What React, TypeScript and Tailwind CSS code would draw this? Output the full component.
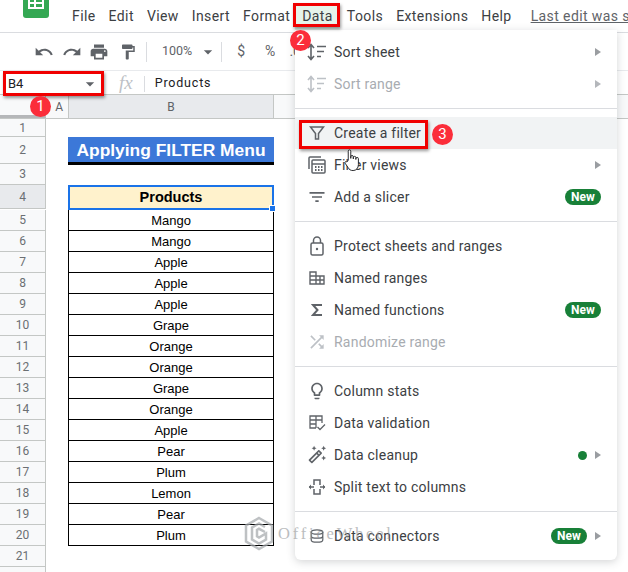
import { MdUndo, MdRedo, MdPrint, MdFormatPaint, MdFilterList, MdOutlineLightbulb, MdOutlineAutoFixHigh, MdShuffle, MdArrowDropDown } from "react-icons/md";

const font = { fontFamily: "Roboto, sans-serif" };

const products = ["Mango", "Mango", "Apple", "Apple", "Apple", "Grape", "Orange", "Orange", "Grape", "Orange", "Apple", "Pear", "Plum", "Lemon", "Pear", "Plum"];

function SortIcon({ muted }: { muted?: boolean }) {
  return (
    <svg width="24" height="18" viewBox="0 0 24 18" fill="none" stroke={muted ? "#bdc1c6" : "#5f6368"} strokeWidth="1.6">
      <path d="M6 2v14M3 5l3-3.5L9 5M3 13l3 3.5L9 13" />
      <path d="M12 3.500h9M12 8.500h7M12 13.500h4" />
    </svg>
  );
}

function FunnelIcon() {
  return (
    <svg width="16" height="14" viewBox="0 0 16 14" fill="none" stroke="#5f6368" strokeWidth="1.5">
      <path d="M1.500 1h13L9.500 7.500V13h-3V7.500z" />
    </svg>
  );
}

function FilterViewsIcon() {
  return (
    <svg width="20" height="20" viewBox="0 0 20 20" fill="none" stroke="#5f6368" strokeWidth="1.5">
      <path d="M2 14V3a1 1 0 0 1 1-1h11" />
      <rect x="5" y="5" width="13" height="13" rx="1" />
      <path d="M5 9h13" />
      <path d="M8 12h1.500M11 12h1.500M14 12h1.500M8 15h1.500M11 15h1.500M14 15h1.500" strokeWidth="1.800" />
    </svg>
  );
}

function LockIcon() {
  return (
    <svg width="14" height="20" viewBox="0 0 14 20" fill="none" stroke="#5f6368" strokeWidth="1.500">
      <rect x="1" y="7" width="12" height="12" rx="1.500" />
      <path d="M3.500 7V4.500a3.500 3.500 0 0 1 7 0V7" />
      <circle cx="7" cy="13" r="1.200" fill="#5f6368" stroke="none" />
    </svg>
  );
}

function NamedRangesIcon() {
  return (
    <svg width="16" height="14" viewBox="0 0 16 14" fill="none" stroke="#5f6368" strokeWidth="1.400">
      <path d="M1 1h6v12H1zM7 5h8v8H7zM1 5h6M1 9h14M11 5v8" />
    </svg>
  );
}

function SigmaIcon() {
  return (
    <svg width="12" height="14" viewBox="0 0 12 14" fill="none" stroke="#5f6368" strokeWidth="2">
      <path d="M11 2H2l4.500 5L2 12h9" />
    </svg>
  );
}

function ValidationIcon() {
  return (
    <svg width="18" height="18" viewBox="0 0 18 18" fill="none" stroke="#5f6368" strokeWidth="1.300">
      <path d="M8 14H2V2h12v7M2 6h12M2 10h6M8 2v12" />
      <path d="M9.500 13l2.500 2.500 5-5" />
    </svg>
  );
}

function SplitIcon() {
  return (
    <svg width="18" height="18" viewBox="0 0 18 18" fill="none" stroke="#5f6368" strokeWidth="1.500">
      <path d="M6 5V2h6v3M6 13v3h6v-3M6 5v2M12 5v2M6 11v2M12 11v2" />
      <path d="M1 9h5M12 9h5" />
      <path d="M3 6.500L.8 9 3 11.500M15 6.500L17.200 9 15 11.500" fill="#5f6368" stroke="none" />
    </svg>
  );
}

function ConnectorsIcon() {
  return (
    <svg width="16" height="16" viewBox="0 0 18 18" fill="none" stroke="#5f6368" strokeWidth="1.400">
      <ellipse cx="9" cy="4.500" rx="6.500" ry="2.500" />
      <path d="M2.500 4.500v9c0 1.400 3 2.500 6.500 2.500s6.500-1.100 6.500-2.500v-9M2.500 9c0 1.400 3 2.500 6.500 2.500s6.500-1.100 6.500-2.500" />
    </svg>
  );
}

function Arrow({ muted }: { muted?: boolean }) {
  return <span className={`w-0 h-0 border-y-[4px] border-y-transparent border-l-[6px] ${muted ? "border-l-[#b4b7bb]" : "border-l-[#9a9da1]"}`} />;
}

function NewBadge() {
  return <span className="h-[16px] w-[36px] rounded-full bg-[#188038] text-white text-[12px] font-bold leading-[16px] text-center">New</span>;
}

function Item({ icon, label, muted, right, active }: { icon: React.ReactNode; label: string; muted?: boolean; right?: React.ReactNode; active?: boolean }) {
  return (
    <div className={`h-[32px] flex items-center pl-[10px] pr-[16px] ${active ? "bg-[#f1f3f4]" : ""}`}>
      <span className="w-[24px] h-[24px] flex items-center justify-center shrink-0">{icon}</span>
      <span className={`ml-[5px] text-[14px] tracking-[0.22px] ${muted ? "text-[#a8acb1]" : "text-[#3c4043]"}`}>{label}</span>
      <span className="ml-auto flex items-center gap-[8px]">{right}</span>
    </div>
  );
}

function Separator() {
  return (
    <div className="h-[17px] flex items-center">
      <div className="w-full h-px bg-[#dadce0]" />
    </div>
  );
}

function Badge({ n, className }: { n: number; className: string }) {
  return (
    <div className={`absolute w-[21px] h-[21px] rounded-full bg-[#fb2d3a] text-white text-[15px] leading-[21px] text-center ${className}`}>
      {n}
    </div>
  );
}

function RowHead({ n, h, active }: { n: number; h: string; active?: boolean }) {
  return (
    <div className={`w-[46px] shrink-0 border-r border-b border-[#c4c7c5] text-[12px] text-[#6b6f73] flex items-center justify-center ${h} ${active ? "bg-[#e8eaed]" : "bg-[#f8f9fa]"}`}>
      {n}
    </div>
  );
}

export default function App() {
  const cell = { fontFamily: "'Liberation Sans', Arial, sans-serif" };

  return (
    <div className="relative w-[628px] h-[572px] overflow-hidden bg-white flex flex-col" style={font}>
      {/* title / menu bar */}
      <div className="h-[33px] shrink-0 border-b border-[#dadce0] flex items-center text-[14px] tracking-[0.4px] text-[#3c4043] relative">
        <div className="absolute left-[23px] top-0 w-[26px] h-[18px] bg-[#34a853] rounded-b-[3px] flex justify-center">
          <div className="w-[16px] h-[9px] border-2 border-t-0 border-white grid grid-cols-2 grid-rows-2">
            <div className="border-r-2 border-b-2 border-white" />
            <div className="border-b-2 border-white" />
            <div className="border-r-2 border-white" />
          </div>
        </div>
        <div className="ml-[72px] flex items-center gap-[13px]">
          <span>File</span>
          <span>Edit</span>
          <span>View</span>
          <span>Insert</span>
          <span>Format</span>
          <span className="-ml-[8px] -mr-[7px] px-[7px] py-[3px] bg-[#e6f4ea]">Data</span>
          <span className="ml-[1px]">Tools</span>
          <span>Extensions</span>
          <span>Help</span>
          <span className="ml-[6px] text-[#5f6368] underline whitespace-nowrap">Last edit was seconds ago</span>
        </div>
      </div>

      {/* toolbar */}
      <div className="h-[38px] shrink-0 flex items-center text-[#5f6368] pl-[34px] border-b border-[#e8eaed]">
        <MdUndo size={20} />
        <MdRedo size={20} className="ml-[8px]" />
        <MdPrint size={20} className="ml-[7px]" />
        <MdFormatPaint size={18} className="ml-[10px]" />
        <div className="w-px h-[20px] bg-[#dadce0] ml-[9px]" />
        <span className="ml-[15px] text-[12.5px]">100%</span>
        <MdArrowDropDown size={20} className="ml-[6px]" />
        <div className="w-px h-[20px] bg-[#dadce0] ml-[3px]" />
        <span className="ml-[15px] text-[14px]">$</span>
        <span className="ml-[20px] text-[14px]">%</span>
        <span className="ml-[14px] text-[14px]">.0</span>
      </div>

      {/* formula bar */}
      <div className="h-[24px] shrink-0 flex items-center border-b border-[#c4c7c5] text-[13px] text-[#202124] pt-[2px]">
        <div className="w-[108px] pl-[8px] flex items-center justify-between pr-[8px]">
          <span className="text-[13px]">B4</span>
          <MdArrowDropDown size={20} className="text-[#5f6368]" />
        </div>
        <span className="ml-[11px] text-[19px] italic text-[#bdc1c6]" style={{ fontFamily: "'Liberation Serif', serif" }}>fx</span>
        <div className="w-px h-[16px] bg-[#dadce0] ml-[11px]" />
        <span className="ml-[10px] tracking-[0.8px] text-[12.5px]">Products</span>
      </div>

      {/* column headers */}
      <div className="h-[24px] shrink-0 flex border-b border-[#c4c7c5] text-[12px] text-[#5f6368] bg-[#f8f9fa]">
        <div className="w-[46px] border-r-[1px] border-[#c4c7c5] border-b-[3px] border-b-[#b5b7b9]" />
        <div className="w-[23px] border-r border-[#c4c7c5] flex items-center justify-end pr-[5px]">A</div>
        <div className="w-[205px] border-r border-[#c4c7c5] bg-[#e8eaed] flex items-center justify-center">B</div>
      </div>

      {/* sheet */}
      <div className="flex-1 flex flex-col">
        <div className="flex"><RowHead n={1} h="h-[18px]" /></div>
        <div className="flex">
          <RowHead n={2} h="h-[27px]" />
          <div className="ml-[22px] w-[206px] h-[28px] pt-[1px] bg-[#3c78d8] border-b-[3px] border-black text-white font-bold text-[17.4px] flex items-center justify-center -mb-[1px]" style={cell}>
            Applying FILTER Menu
          </div>
        </div>
        <div className="flex"><RowHead n={3} h="h-[21px]" /></div>
        <div className="flex">
          <RowHead n={4} h="h-[24px]" active />
          <div className="relative ml-[22px] w-[206px] h-[25px] bg-[#fff2cc] border-2 border-[#1a73e8] font-bold text-[14.5px] text-black flex items-center justify-center" style={cell}>
            Products
            <div className="absolute -right-[4px] -bottom-[4px] w-[7px] h-[7px] bg-[#1a73e8] border border-white" />
          </div>
        </div>
        {products.map((p, i) => (
          <div className="flex" key={i}>
            <RowHead n={i + 5} h="h-[21px]" />
            <div className="ml-[22px] w-[206px] h-[21px] pt-[1px] border-x border-b border-black text-[13px] text-black flex items-center justify-center" style={cell}>
              {p}
            </div>
          </div>
        ))}
        <div className="flex"><RowHead n={21} h="h-[21px]" /></div>
        <div className="flex"><RowHead n={22} h="h-[21px]" /></div>
      </div>

      {/* Data menu */}
      <div className="absolute left-[295px] top-[30px] w-[322px] h-[530px] bg-white rounded-b-[6px] pt-[6px] shadow-[0_2px_8px_rgba(60,64,67,0.22)]">
        <Item icon={<SortIcon />} label="Sort sheet" right={<Arrow />} />
        <Item icon={<SortIcon muted />} label="Sort range" muted right={<Arrow muted />} />
        <Separator />
        <Item icon={<FunnelIcon />} label="Create a filter" active />
        <Item icon={<FilterViewsIcon />} label="Filter views" right={<Arrow />} />
        <Item icon={<MdFilterList size={20} className="text-[#5f6368]" />} label="Add a slicer" right={<NewBadge />} />
        <Separator />
        <Item icon={<LockIcon />} label="Protect sheets and ranges" />
        <Item icon={<NamedRangesIcon />} label="Named ranges" />
        <Item icon={<SigmaIcon />} label="Named functions" right={<NewBadge />} />
        <Item icon={<MdShuffle size={20} className="text-[#bdc1c6]" />} label="Randomize range" muted />
        <Separator />
        <Item icon={<MdOutlineLightbulb size={20} className="text-[#5f6368]" />} label="Column stats" />
        <Item icon={<ValidationIcon />} label="Data validation" />
        <Item
          icon={<MdOutlineAutoFixHigh size={20} className="text-[#5f6368]" />}
          label="Data cleanup"
          right={<><span className="w-[9px] h-[9px] rounded-full bg-[#188038]" /><Arrow /></>}
        />
        <Item icon={<SplitIcon />} label="Split text to columns" />
        <Separator />
        <Item icon={<ConnectorsIcon />} label="Data connectors" right={<><NewBadge /><Arrow /></>} />
      </div>

      {/* annotations */}
      <div className="absolute left-[3px] top-[71px] w-[101px] h-[25px] border-[3px] border-[#f00000] shadow-[1px_2px_3px_rgba(0,0,0,0.4)]" />
      <div className="absolute left-[293px] top-[3px] w-[47px] h-[24px] border-[3px] border-[#f00000] shadow-[1px_2px_3px_rgba(0,0,0,0.4)]" />
      <div className="absolute left-[299px] top-[120px] w-[129px] h-[29px] border-[3px] border-[#f00000] shadow-[1px_2px_3px_rgba(0,0,0,0.4)]" />
      <Badge n={1} className="left-[30px] top-[96px]" />
      <Badge n={2} className="left-[290px] top-[30px]" />
      <Badge n={3} className="left-[432px] top-[124px]" />

      {/* hand cursor */}
      <svg className="absolute left-[344px] top-[147px]" width="18" height="27" viewBox="0 0 17 22" fill="#fff" stroke="#202124" strokeWidth="0.9">
        <path d="M4 11V2.200a1.200 1.200 0 0 1 2.400 0V9V7.500a1.200 1.200 0 0 1 2.400 0V9.500V8.300a1.200 1.200 0 0 1 2.400 0V10V9.300a1.200 1.200 0 0 1 2.400 0V15c0 3-2 5.500-5 5.500-2.500 0-3.700-1-4.700-2.800L1 13.500c-.6-1.100.9-2.100 1.700-1.200z" />
      </svg>

      {/* watermark */}
      <div className="absolute left-[243px] top-[516px] flex items-center">
        <svg className="opacity-70" width="32" height="35" viewBox="0 0 32 35" fill="none" stroke="#a3a7ab" strokeWidth="2.500">
          <path d="M16 2l13 7.500v16L16 33 3 25.500v-16z" />
          <path d="M22 11l-6-3.500L9 11.500v12l7 4 7-4v-6l-7 4-2-1.200V14l2-1.200 6 3.200" />
        </svg>
        <span className="ml-[3px] mt-[2px] text-[16.5px] tracking-[2.8px] text-[#8f9296] opacity-60" style={{ fontFamily: "'Liberation Serif', serif" }}>OfficeWheel</span>
      </div>
    </div>
  );
}
